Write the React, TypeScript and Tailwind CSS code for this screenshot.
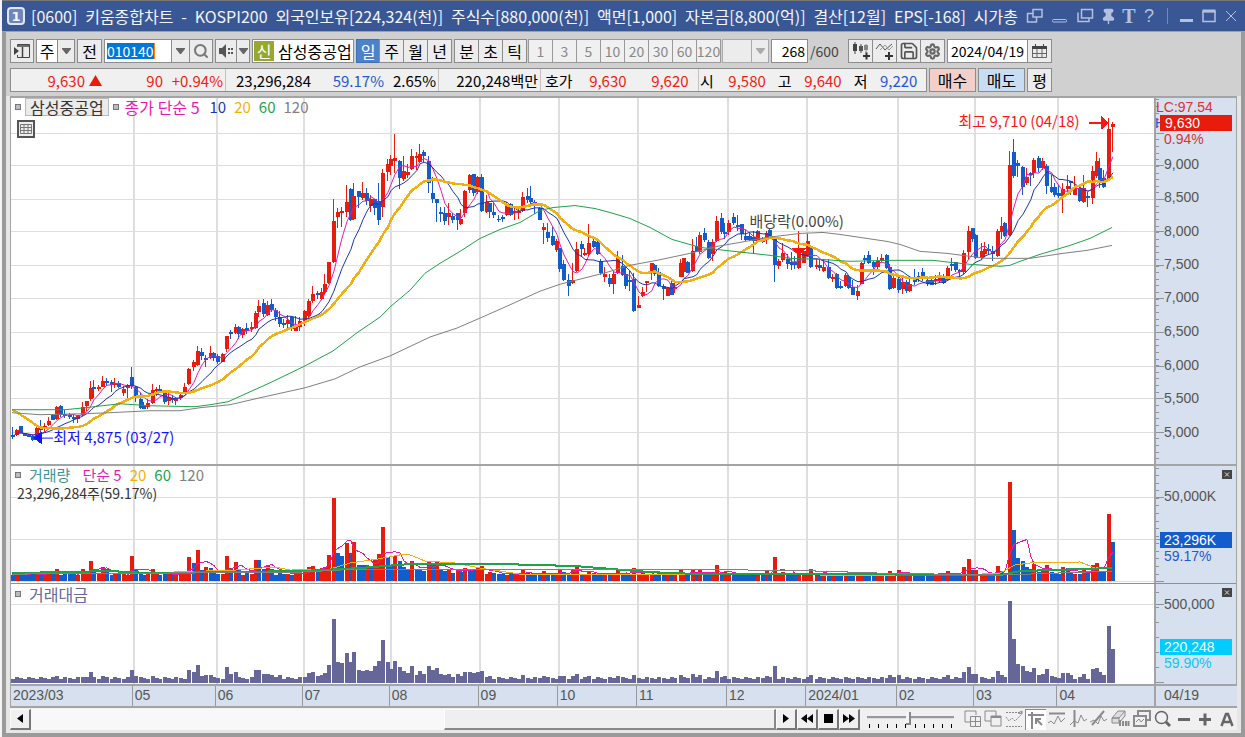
import React from "react";
import { Search, Settings, Save, Pin } from "lucide-react";

const RED = "#e81c0c";
const BLUE = "#125ccc";

/* x high bodyTop bodyBottom low direction */
const CANDLES = `
13 428 436 438 440 b;17 430 431 436 437 r;21 427 427 434 434 b;25 434 434 437 437 b;29 435 436 438 438 b;33 436 437 441 442 b;37 428 429 438 438 r;41 421 428 431 434 b;45 424 427 428 433 r;49 418 422 426 427 r;
53 415 416 421 421 b;57 407 408 420 421 r;61 406 407 416 418 b;65 411 415 417 419 b;70 414 416 418 420 b;74 416 418 420 424 b;78 416 416 420 424 r;83 403 408 416 417 r;87 402 402 407 412 r;91 382 389 400 402 r;
94 381 388 390 399 b;99 386 388 389 392 r;103 377 382 388 388 r;107 379 382 383 387 b;112 381 383 386 393 b;115 379 384 385 389 r;119 382 384 388 389 b;124 387 390 394 397 r;128 385 387 389 399 r;132 368 378 387 390 b;
136 387 388 399 403 b;141 394 400 409 410 b;144 403 407 410 410 b;148 400 404 408 410 r;153 385 391 404 405 r;157 388 390 391 397 r;160 386 390 394 394 b;165 394 394 403 405 b;169 394 398 402 406 r;173 396 399 401 404 b;
176 398 400 402 406 r;181 394 396 399 401 r;185 384 388 395 395 r;189 369 370 385 386 r;194 361 363 368 372 r;198 347 352 366 367 r;202 349 353 357 361 b;206 356 359 360 368 b;211 347 354 359 360 r;214 353 354 359 362 b;
218 355 357 363 365 b;223 354 355 363 363 r;227 337 337 350 353 r;231 331 333 334 340 b;236 325 328 334 335 r;239 327 328 335 340 b;243 329 330 336 339 r;247 324 329 332 335 b;252 323 328 330 333 r;256 312 314 329 330 r;
259 301 307 313 318 r;264 300 304 315 318 b;268 302 306 316 317 r;272 300 305 311 313 b;276 309 311 318 322 b;280 312 318 325 328 b;284 320 324 326 329 b;288 316 321 325 329 r;292 317 318 330 332 b;296 317 327 332 332 r;
300 318 322 328 332 r;305 311 312 323 327 r;309 300 302 317 319 r;313 287 295 302 304 r;318 292 294 296 300 b;322 289 293 300 301 r;325 275 285 293 295 r;329 263 263 284 285 r;334 199 222 263 264 r;338 208 212 217 229 r;
342 207 211 212 228 r;347 185 202 212 217 r;351 188 189 220 222 b;354 183 196 219 220 r;359 191 191 197 208 b;363 182 193 198 200 r;367 188 193 201 205 b;371 195 199 206 212 r;375 199 199 208 215 b;379 183 201 220 226 b;
383 169 173 207 217 r;388 159 164 172 181 r;391 155 159 166 175 r;395 134 158 161 173 r;400 160 161 178 189 b;404 156 171 179 181 r;408 164 172 175 178 r;412 149 156 169 170 r;417 152 156 158 170 r;420 144 154 162 163 r;
424 150 152 156 162 b;429 156 161 183 193 b;433 177 193 199 203 b;437 199 199 203 223 b;441 207 212 213 223 b;445 207 213 222 226 b;449 203 213 217 226 r;453 213 216 220 224 b;458 213 213 220 231 b;461 209 219 225 226 r;
465 190 191 213 217 r;470 174 175 190 193 r;474 174 174 193 196 b;478 176 177 192 194 r;482 174 177 211 212 b;487 195 202 212 213 r;490 203 203 212 218 b;494 203 212 215 218 b;499 215 219 220 223 b;503 215 217 218 223 b;
507 202 204 215 216 r;511 203 204 215 216 b;515 208 211 213 220 r;519 207 211 212 219 r;523 192 197 211 212 r;528 188 196 200 203 b;531 186 198 202 204 b;535 200 202 205 214 b;540 207 208 220 221 b;544 224 228 231 245 r;
548 224 233 239 243 b;553 228 237 246 247 b;557 240 242 251 253 r;560 249 249 270 273 b;564 261 265 281 282 b;569 275 281 287 297 b;573 264 281 284 285 r;577 243 250 272 273 r;582 242 245 250 258 b;585 249 254 255 257 r;
589 225 244 255 257 r;594 239 242 248 249 b;598 239 243 255 256 b;601 260 262 274 276 b;605 268 275 278 283 r;610 275 279 285 288 b;614 272 275 285 295 r;618 252 258 274 275 r;623 256 267 276 277 b;626 267 275 287 290 b;
630 272 281 283 292 b;634 274 280 312 313 b;639 297 306 309 309 r;643 288 293 297 298 r;647 282 282 283 293 r;652 264 264 273 281 r;655 265 266 275 277 b;659 269 273 287 288 b;664 285 287 290 301 b;668 288 289 297 297 r;
672 282 284 296 296 b;675 283 288 289 294 r;681 260 264 278 278 r;684 259 259 273 278 r;688 262 263 274 274 b;693 240 252 272 273 r;697 238 247 253 253 b;700 233 236 253 255 r;705 229 234 241 243 b;709 241 243 259 260 b;
713 240 243 255 262 r;717 216 222 242 243 r;722 213 218 233 235 b;725 224 233 235 240 b;729 220 224 233 236 r;734 213 217 224 226 b;738 215 226 228 232 b;742 225 225 235 241 b;746 231 237 241 242 b;750 234 237 241 242 b;
754 232 238 242 255 b;758 231 232 242 243 r;763 238 240 243 244 b;767 232 234 239 245 r;770 230 231 238 238 b;775 238 239 266 283 b;779 260 262 267 270 r;783 244 254 261 263 r;788 255 260 265 270 b;792 253 263 266 271 b;
795 257 263 266 270 b;799 232 253 269 270 r;804 250 252 264 264 r;808 235 242 257 258 r;811 246 247 268 269 b;817 260 266 268 270 r;820 260 266 269 272 b;824 260 268 272 273 r;829 260 268 279 280 b;833 275 278 280 283 r;
837 274 275 289 290 b;841 282 287 289 290 b;846 274 276 287 288 r;849 277 278 289 290 b;853 281 288 296 296 b;858 286 292 297 301 r;862 263 264 285 285 r;865 256 259 261 265 b;869 252 256 264 265 b;874 262 263 268 276 b;
878 258 262 268 272 r;882 255 259 262 263 r;887 255 256 269 270 b;890 265 268 290 291 b;894 275 279 289 290 r;899 277 280 291 294 b;903 279 283 290 295 r;907 281 283 292 294 b;910 277 285 292 293 r;915 270 279 283 286 b;
919 273 277 280 283 b;923 269 273 278 282 b;928 278 281 285 287 b;932 277 281 286 286 b;936 276 280 282 286 r;940 273 279 282 283 r;944 275 278 284 285 b;948 267 269 281 282 r;952 259 265 267 272 b;956 263 263 271 273 b;
960 270 271 273 281 b;964 251 254 273 275 r;969 227 232 253 260 r;973 229 229 240 243 b;976 235 236 259 260 b;982 244 252 259 260 r;985 243 250 255 258 r;989 245 250 252 256 b;993 247 252 255 262 b;998 230 232 257 258 r;
1002 217 227 233 240 r;1005 223 224 237 238 b;1010 151 165 236 237 r;1014 139 152 176 178 b;1018 160 163 166 177 b;1023 166 167 187 195 b;1027 168 177 183 185 r;1031 172 173 175 186 b;1034 158 160 173 178 r;1039 156 158 168 172 b;
1043 158 161 168 170 r;1047 164 166 186 194 b;1052 175 187 192 193 b;1055 183 187 195 197 b;1059 185 193 196 198 b;1063 183 189 197 213 r;1068 175 186 189 194 r;1071 181 181 183 195 b;1075 176 188 195 195 r;1080 187 188 201 202 b;
1084 175 188 202 203 r;1088 192 196 198 207 b;1093 166 171 198 204 r;1097 152 161 176 178 r;1100 158 168 183 188 b;1104 170 178 187 188 b;1109 118 129 180 180 r;1113 122 124 127 152 r`
  .trim()
  .split(";")
  .map((row) => {
    const [x, hi, top, bot, lo, dir] = row.trim().split(" ");
    return { x: +x, hi: +hi, top: +top, bot: +bot, lo: +lo, up: dir === "r" };
  });

/* x volumeHeight amountHeight direction */
const SPIKES = `57 12 7 r;83 12 6 r;87 8 6 r;91 20 11 r;94 12 6 b;103 14 7 r;107 12 6 b;132 25 13 r;136 12 7 b;153 12 7 r;189 24 13 r;194 18 11 b;198 31 18 r;202 11 7 b;206 14 8 r;211 13 8 b;227 25 16 r;231 13 9 b;236 19 11 r;239 12 6 b;256 21 13 r;259 21 13 b;264 12 9 b;268 16 9 r;272 12 8 b;280 11 8 b;305 9 6 r;309 14 10 r;313 15 11 r;318 10 7 b;322 13 8 r;325 14 10 r;329 26 18 r;334 82 64 r;338 28 21 b;342 25 20 b;347 38 30 r;351 28 21 b;354 39 31 r;359 16 13 b;363 16 12 b;367 16 13 r;371 15 12 b;375 22 17 r;379 27 22 r;383 54 43 r;388 24 21 b;391 16 14 b;395 25 22 r;400 20 16 b;404 14 12 b;408 12 10 b;412 20 17 r;417 11 8 b;420 12 12 b;424 10 9 b;429 20 17 r;433 16 13 b;437 19 15 r;441 11 9 b;445 10 8 b;449 12 9 r;453 8 6 b;458 11 9 r;461 9 7 b;465 13 11 r;470 12 11 b;474 11 10 b;478 13 11 r;482 15 12 r;490 9 7 r;523 11 8 r;544 10 7 r;560 11 7 r;564 9 7 b;573 12 7 r;577 15 9 r;589 9 7 r;618 11 7 r;634 13 8 r;681 11 8 r;693 12 9 r;700 11 8 r;717 16 12 r;725 9 7 r;767 10 7 r;775 24 17 r;783 9 6 r;811 12 8 r;890 10 8 r;899 11 8 r;947 10 8 r;964 14 11 r;969 22 16 r;973 11 9 b;976 11 9 r;998 15 12 r;1002 10 8 b;1010 98 82 r;1014 51 44 b;1018 23 19 b;1023 20 17 b;1027 14 12 b;1031 12 11 b;1034 17 15 r;1039 9 8 b;1043 10 9 r;1047 16 14 r;1052 9 7 b;1063 14 10 r;1068 13 10 b;1071 9 8 b;1084 11 9 r;1093 16 14 r;1097 18 15 r;1100 10 11 b;1104 10 8 b;1109 66 57 r;1113 39 34 b`
  .split(";")
  .map((row) => row.split(" "));

const BARS = CANDLES.map((c, i) => {
  const hit = SPIKES.find((s) => Math.abs(+s[0] - c.x) <= 1);
  return hit
    ? { x: c.x, vol: +hit[1], amt: +hit[2], up: hit[3] === "r" }
    : { x: c.x, vol: 6 + ((i * 7) % 4) * 0.7, amt: 4 + ((i * 5) % 3), up: c.up };
});

function average(values: number[], span: number) {
  return CANDLES.map((c, i) => {
    const part = values.slice(Math.max(0, i - span + 1), i + 1);
    return [c.x, part.reduce((a, b) => a + b, 0) / part.length];
  });
}
const join = (pts: number[][]) => pts.map((p) => `${p[0]},${p[1].toFixed(1)}`).join(" ");

const closes = CANDLES.map((c) => (c.up ? c.top : c.bot));
const ma5 = join(average(closes, 5));
const ma10 = join(average(closes, 10));
const ma20 = "12,411 18,414 22,417 30,422 35,426 41,429 60,430 80,428 86,426 " + join(average(closes, 20).slice(20));
const ma60 =
  "12,411 65,411 85,409 120,405 150,407 195,408 210,406 228,403 250,393 270,384 305,367 333,352 358,333 380,318 391,307 410,291 425,274 440,264 460,252 480,239 500,230 520,223 540,211 553,208 575,206 595,209 610,213 630,219 650,228 672,240 700,248 725,251 770,256 790,259 820,260 850,262 888,261 933,261 950,263 970,265 1000,267 1010,266 1020,262 1040,255 1070,246 1090,239 1112,228";
const ma120 =
  "12,414 40,416 85,415 110,414 150,412 180,412 200,409 230,406 260,399 305,389 335,380 360,368 390,357 430,338 457,329 480,319 507,307 540,292 560,285 607,273 630,266 657,261 690,254 717,247 740,243 767,238 800,234 823,233 840,235 887,242 900,245 920,252 947,254 970,257 987,259 1030,259 1063,254 1087,251 1112,246";
const vma5 = join(average(BARS.map((b) => 581 - b.vol), 5));
const vma20 =
  "12,573 140,573 235,570 275,567 290,570 330,569 350,563 378,559 400,555 410,555 425,561 455,563 480,568 520,574 600,574 750,574 830,575 960,575 1000,573 1015,565 1030,563 1080,562 1095,568 1112,567";
const vma60 =
  "12,573 110,571 150,573 300,571 360,568 410,564 500,564 575,566 650,572 700,574 830,574 1000,575 1020,571 1112,568";
const vma120 = "12,574 300,572 360,569 420,569 685,569 820,571 880,573 1000,575 1112,571";

const MONTH_X = [134, 217, 304, 391, 480, 559, 638, 728, 807, 898, 975, 1058];
const PRICE_Y = [133, 165, 199, 232, 266, 299, 333, 367, 399, 433];

function Grid({ ys, top, bottom }: { ys: number[]; top: number; bottom: number }) {
  return (
    <g fill="#dedede">
      {MONTH_X.map((x) => (
        <rect key={x} x={x - 1} y={top} width={2} height={bottom - top} />
      ))}
      {ys.map((y) => (
        <rect key={y} x={11} y={y} width={1143} height={1} />
      ))}
    </g>
  );
}

function Line({ points, color, width = 1 }: { points: string; color: string; width?: number }) {
  return <polyline points={points} fill="none" stroke={color} strokeWidth={width} />;
}

function Axis({ top, height, major, step }: { top: number; height: number; major: number[]; step: number }) {
  const minors = [];
  for (let y = major[major.length - 1] + step * 4; y > top; y -= step) if (y < top + height) minors.push(y);
  return (
    <svg className="absolute inset-0 h-full w-full" viewBox={`0 ${top} 82 ${height}`} preserveAspectRatio="none" shapeRendering="crispEdges" aria-hidden="true">
      <g fill="#8f9296">
        {minors.map((y) => (
          <rect key={y} x={0} y={y} width={3} height={1} />
        ))}
        {major.map((y) => (
          <rect key={y} x={0} y={y} width={8} height={1} />
        ))}
      </g>
    </svg>
  );
}

const PLOT = "absolute inset-0 h-full w-full";
const BTN = "flex h-6 items-center justify-center border border-[#8c8c8c] bg-[#ececec] leading-none text-black";
const AXIS = "relative w-[82px] border-l-2 border-[#a4a4a4] bg-[#d6e0ee] font-['Liberation_Sans'] text-sm leading-4";
const AXIS_LABEL = "absolute left-2 -translate-y-1/2 leading-4 text-[#555]";

function Down({ light = false }: { light?: boolean }) {
  return (
    <svg width="9" height="6" viewBox="0 0 9 6" aria-hidden="true">
      <path d="M0 0H9V1L5 6H4L0 1Z" fill={light ? "#aaa" : "#666"} />
    </svg>
  );
}

function Marker() {
  return <span className="inline-block size-1.5 shrink-0 border border-[#777] bg-[#bbb]" />;
}

function CloseBox() {
  return (
    <button aria-label="닫기" className="absolute right-1 top-1 flex h-[9px] w-2.5 items-center justify-center bg-[#444]">
      <svg width="6" height="5" viewBox="0 0 6 5" aria-hidden="true">
        <path d="M1 0.5L5 4.5M5 0.5L1 4.5" stroke="#ddd" />
      </svg>
    </button>
  );
}

function TitleBar() {
  const parts = ["[0600]", "키움종합차트", "-", "KOSPI200", "외국인보유[224,324(천)]", "주식수[880,000(천)]", "액면[1,000]", "자본금[8,800(억)]", "결산[12월]", "EPS[-168]", "시가총"];
  const icon = "flex h-6 w-[25px] items-center justify-center text-[#b3c1df]";
  return (
    <header className="flex h-8 items-center border-b border-t border-b-[#8fa2c8] border-t-[#777] bg-[#3a5795] pl-[5px] pr-[3px] text-[#f2f5fb]">
      <span className="flex size-[18px] shrink-0 items-center justify-center rounded border-2 border-[#dfe6f5] bg-[#6f86b8] font-['DejaVu_Sans'] text-[13px] font-bold leading-none">1</span>
      <h1 className="ml-1.5 flex min-w-0 flex-1 justify-between overflow-hidden whitespace-nowrap leading-6">
        {parts.map((p) => (
          <span key={p}>{p}</span>
        ))}
      </h1>
      <div className="ml-1 flex shrink-0 items-center">
        <button aria-label="창 분리" className={icon}>
          <svg width="18" height="16" viewBox="0 0 18 16" fill="none" stroke="currentColor" strokeWidth="1.5"><path d="M7 1.5H16V9H7ZM7 5.5H1.5V14H10.5V9" /></svg>
        </button>
        <button aria-label="내리기" className={icon}>
          <svg width="16" height="16" viewBox="0 0 16 16" fill="none" stroke="currentColor"><rect x="0.5" y="11.5" width="14" height="2.5" rx="1" /></svg>
        </button>
        <button aria-label="복제" className={icon}>
          <svg width="18" height="16" viewBox="0 0 18 16" fill="none" stroke="currentColor" strokeWidth="1.5"><path d="M5.500 1.500H16.500V10H5.500ZM2 4.500V13.500H13V10.500" /></svg>
        </button>
        <button aria-label="고정" className="flex h-6 w-[22px] items-center justify-center text-[#b3c1df]">
          <Pin size={17} fill="currentColor" />
        </button>
        <button aria-label="글꼴" className="flex h-6 w-5 items-center justify-center font-['Liberation_Serif'] text-xl font-bold text-[#b3c1df]">T</button>
        <button aria-label="도움말" className="flex h-6 w-5 items-center justify-center font-['Liberation_Sans'] text-lg text-[#b3c1df]">?</button>
        <span className="mx-2 h-4 w-px bg-[#7289ba]" />
        <button aria-label="최소화" className="flex h-6 w-[22px] items-center justify-center text-[#b3c1df]">
          <svg width="14" height="16" viewBox="0 0 14 16"><rect x="0" y="11" width="13" height="3" fill="currentColor" /></svg>
        </button>
        <button aria-label="최대화" className="flex h-6 w-[22px] items-center justify-center text-[#b3c1df]">
          <svg width="14" height="14" viewBox="0 0 14 14" fill="none" stroke="currentColor"><path d="M1 2.500H13V12.500H1Z" strokeWidth="1.5" /><path d="M0.500 2H13.500" strokeWidth="3" /></svg>
        </button>
        <button aria-label="닫기" className="flex h-6 w-[22px] items-center justify-center text-[#b3c1df]">
          <svg width="12" height="12" viewBox="0 0 12 12" stroke="currentColor"><path d="M1 1L11 11M11 1L1 11" /></svg>
        </button>
      </div>
    </header>
  );
}

function Toolbar() {
  return (
    <div className="flex items-center gap-0.5 px-1 text-black">
      <button aria-label="패널" className={`${BTN} w-6`}>
        <svg width="18" height="16" viewBox="0 0 18 16" fill="none" stroke="#444"><path d="M4.500 3V1.500H16.500V14.500H4.500V12" /><path d="M4 3H16.500M9.500 4V14" strokeWidth="1.500" /><path d="M1 4L6 8L1 12Z" fill="#444" stroke="none" /></svg>
      </button>
      <div className="flex">
        <button className={`${BTN} w-[22px] bg-white`}>주</button>
        <button aria-label="구분 선택" className={`${BTN} -ml-px w-[18px]`}><Down /></button>
      </div>
      <button className={`${BTN} w-[25px]`}>전</button>
      <div className="flex">
        <div className="flex h-6 w-[68px] items-center border border-[#8c8c8c] bg-white pl-0.5">
          <input aria-label="종목코드" defaultValue="010140" className="h-4 w-12 border-r border-orange-400 bg-[#0078d7] text-sm leading-4 text-white outline-none" />
        </div>
        <button aria-label="종목 목록" className={`${BTN} -ml-px w-[19px]`}><Down /></button>
        <button aria-label="종목 검색" className={`${BTN} -ml-px w-6`}><Search size={16} color="#777" strokeWidth={3} /></button>
      </div>
      <div className="flex">
        <button aria-label="소리" className={`${BTN} w-[22px]`}>
          <svg width="16" height="14" viewBox="0 0 16 14" fill="#555"><path d="M1 4H4L8 0V14L4 10H1ZM10 4H12V6H10ZM10 8H12V10H10ZM13 4H15V6H13ZM13 8H15V10H13Z" /></svg>
        </button>
        <button aria-label="소리 설정" className={`${BTN} -ml-px w-[14px]`}><Down /></button>
      </div>
      <div className="flex h-6 w-[102px] items-center border border-[#8c8c8c] bg-white pl-px">
        <span className="flex h-5 w-5 shrink-0 items-center justify-center bg-[#98a82f] text-white">신</span>
        <span className="ml-1 whitespace-nowrap">삼성중공업</span>
      </div>
      <div className="flex">
        <button className="flex h-6 w-6 items-center justify-center border border-[#3c71b8] bg-[#4d82c8] leading-none text-white">일</button>
        {["주", "월", "년"].map((t) => (
          <button key={t} className={`${BTN} -ml-px w-[25px]`}>{t}</button>
        ))}
      </div>
      <div className="flex">
        {["분", "초", "틱"].map((t) => (
          <button key={t} className={`${BTN} -mr-px w-[25px]`}>{t}</button>
        ))}
      </div>
      <div className="flex">
        {["1", "3", "5", "10", "20", "30", "60", "120"].map((t) => (
          <button key={t} className="-mr-px flex h-6 w-[25px] items-center justify-center border border-[#999] bg-[#f0f0f0] text-sm leading-none text-[#888]">{t}</button>
        ))}
      </div>
      <div className="flex">
        <span className="h-6 w-[30px] border border-[#aaa] bg-[#ececec]" />
        <button aria-label="주기 선택" className="-ml-px flex h-6 w-[18px] items-center justify-center border border-[#aaa] bg-[#ececec]"><Down light /></button>
      </div>
      <input aria-label="조회 개수" defaultValue="268" className="h-6 w-[37px] border border-[#8c8c8c] bg-white pr-0.5 text-right text-sm text-black" />
      <span className="w-9 text-sm text-[#444]">/600</span>
      <div className="flex">
        <button aria-label="차트 추가" className={`${BTN} -mr-px w-[25px]`}>
          <svg width="20" height="18" viewBox="0 0 20 18"><path d="M4 0V12M10 2V11" stroke="#444" /><rect x="2" y="2" width="4" height="7" fill="#444" /><rect x="8" y="4" width="4" height="5" fill="#555" /><path d="M15 2V11" stroke="#888" /><rect x="13" y="3" width="4" height="5" fill="#888" /><path d="M12 14H19M15.500 10.500V17.500" stroke="#333" strokeWidth="2" /></svg>
        </button>
        <button aria-label="지표 추가" className={`${BTN} -mr-px w-[25px]`}>
          <svg width="20" height="18" viewBox="0 0 20 18" fill="none"><path d="M1 7L5 2L10 8L17 2" stroke="#555" /><path d="M5 8L10 3L14 8L18 4" stroke="#999" /><path d="M10 14H18M14 10V18" stroke="#333" strokeWidth="2" /></svg>
        </button>
        <button aria-label="저장" className={`${BTN} -mr-px w-[25px]`}><Save size={20} color="#555" strokeWidth={2} /></button>
        <button aria-label="설정" className={`${BTN} w-[25px]`}><Settings size={17} color="#666" strokeWidth={3} /></button>
      </div>
      <div className="flex">
        <input aria-label="날짜" defaultValue="2024/04/19" className="h-6 w-[81px] border border-[#8c8c8c] bg-white pl-[3px] text-sm text-black" />
        <button aria-label="달력" className={`${BTN} -ml-px w-[25px]`}>
          <svg width="15" height="14" viewBox="0 0 15 14" fill="none" stroke="#666"><path d="M0.500 2.500H14.500V13.500H0.500ZM5 5V13M10 5V13M1 9.500H14" /><path d="M0 3.500H15" stroke="#444" strokeWidth="3" /><path d="M3.500 0V2M11.500 0V2" stroke="#444" /></svg>
        </button>
      </div>
    </div>
  );
}

function QuoteBar() {
  const cell = "flex items-center justify-end border-r border-[#c2c2c2]";
  const up = "text-[#f02010]";
  return (
    <div className="mt-[5px] flex items-center gap-0.5 px-1 text-[15px] text-black">
      <div className="flex h-6 w-[917px] whitespace-nowrap border border-[#8c8c8c] bg-[#f0f0f0] leading-none">
        <div className={`${cell} w-[215px] pr-0.5 ${up}`}>
          <span>9,630</span>
          <svg className="ml-1" width="13" height="11" viewBox="0 0 13 11" aria-label="상승"><path d="M6.500 0L13 11H0Z" fill={RED} /></svg>
          <span className="w-[61px] text-right">90</span>
          <span className="w-[60px] text-right">+0.94%</span>
        </div>
        <div className={`${cell} w-[213px] pr-0.5`}>
          <span>23,296,284</span>
          <span className="w-[73px] text-right text-[#2458d0]">59.17%</span>
          <span className="w-[52px] text-right">2.65%</span>
        </div>
        <div className={`${cell} w-[102px] pr-0.5`}>220,248백만</div>
        <div className={`${cell} w-[158px] justify-start pl-1`}>
          <span>호가</span>
          <span className={`w-[54px] text-right ${up}`}>9,630</span>
          <span className={`w-[62px] text-right ${up}`}>9,620</span>
        </div>
        <div className="flex flex-1 items-center pl-px">
          <span>시</span>
          <span className={`w-[52px] text-right ${up}`}>9,580</span>
          <span className="ml-3">고</span>
          <span className={`w-[50px] text-right ${up}`}>9,640</span>
          <span className="ml-3">저</span>
          <span className="w-[50px] text-right text-[#2458d0]">9,220</span>
        </div>
      </div>
      <button className="flex h-6 w-[47px] items-center justify-center border border-[#8c8c8c] bg-[#f3cfca] text-base leading-none">매수</button>
      <button className="flex h-6 w-[47px] items-center justify-center border border-[#8c8c8c] bg-[#c7ddf3] text-base leading-none">매도</button>
      <button className={`${BTN} w-[25px] text-base`}>평</button>
    </div>
  );
}

const PRICE_LABELS: [string, number][] = [["9,000", 164], ["8,500", 197], ["8,000", 232], ["7,500", 265], ["7,000", 298], ["6,500", 332], ["6,000", 366], ["5,500", 399], ["5,000", 433]];

function PricePanel() {
  return (
    <section className="flex grow-[368] basis-0 border-b-2 border-[#a4a4a4]">
      <div className="relative flex-1">
        <svg className={PLOT} viewBox="11 98 1143 367" preserveAspectRatio="none" shapeRendering="crispEdges" aria-label="주가 차트">
          <Grid ys={PRICE_Y} top={98} bottom={466} />
          {CANDLES.map((c) => (
            <g key={c.x} fill={c.up ? RED : BLUE}>
              <rect x={c.x - 1} y={c.hi} width={1} height={c.lo - c.hi} />
              <rect x={c.x - 2} y={c.top} width={4} height={Math.max(2, c.bot - c.top)} />
            </g>
          ))}
          <Line points={ma5} color="#e619b3" />
          <Line points={ma10} color="#1a36b0" />
          <Line points={ma20} color="#f2b010" width={2.5} />
          <Line points={ma60} color="#1ea348" />
          <Line points={ma120} color="#808080" />
          <path d="M792 249H806L799 257Z" fill="#ff1414" />
          <path d="M1089 123H1103" stroke="#ff1414" strokeWidth="2" />
          <path d="M1101 116L1109 123L1101 130Z" fill="#ff1414" />
          <path d="M42 439.500H53" stroke="#1414ff" />
          <path d="M42 433V446L33 439Z" fill="#1414ff" />
        </svg>
        <div className="relative flex items-center gap-1 whitespace-nowrap pl-1 leading-4">
          <Marker />
          <span className="border border-[#bbb] bg-[#ebebeb] px-1 text-[#333]">삼성중공업</span>
          <Marker />
          <span className="ml-0.5 text-[#e619b3]">종가 단순 5</span>
          <span className="ml-1.5 text-[15px] text-[#1a36b0]">10</span>
          <span className="ml-1 text-[15px] text-[#f0b010]">20</span>
          <span className="ml-1 text-[15px] text-[#1ea348]">60</span>
          <span className="ml-1 text-[15px] text-[#808080]">120</span>
        </div>
        <button aria-label="표 보기" className="relative ml-1.5 mt-1 flex size-[18px] items-center justify-center border-2 border-[#555] bg-[#eee]">
          <svg width="12" height="12" viewBox="0 0 12 12" fill="none" stroke="#777"><path d="M0.500 1.500H11.500V10.500H0.500ZM4 1V11M8 1V11M0 4.500H12M0 7.500H12" /></svg>
        </button>
        <span className="absolute left-[82.9%] top-[15px] whitespace-nowrap text-[15px] leading-4 text-[#ff1414]">최고 9,710 (04/18)</span>
        <span className="absolute left-[64.6%] top-[31.500%] whitespace-nowrap text-[15px] leading-4 text-[#444]">배당락(0.00%)</span>
        <span className="absolute left-[3.700%] top-[90.500%] whitespace-nowrap text-[15px] leading-4 text-[#1414ff]">최저 4,875 (03/27)</span>
      </div>
      <div className={AXIS}>
        <Axis top={98} height={367} major={PRICE_Y} step={6.67} />
        <span className="absolute left-0 top-px text-[#e03030]">LC:97.54</span>
        <span className="absolute -left-px top-[17px] text-[#2458d0]">H</span>
        <span className="absolute left-1 right-1 top-[17px] bg-[#e81c0c] pl-[5px] text-white">9,630</span>
        <span className="absolute left-2 top-[33px] text-[#e03030]">0.94%</span>
        {PRICE_LABELS.map(([t, y]) => (
          <span key={t} className={AXIS_LABEL} style={{ top: `${((y - 98) / 367) * 100}%` }}>{t}</span>
        ))}
      </div>
    </section>
  );
}

function VolumePanel() {
  return (
    <section className="flex grow-[118] basis-0 border-b border-[#8f8f8f]">
      <div className="relative flex-1">
        <svg className={PLOT} viewBox="11 467 1143 116" preserveAspectRatio="none" shapeRendering="crispEdges" aria-label="거래량 차트">
          <Grid ys={[498, 539, 581]} top={467} bottom={583} />
          {BARS.map((b) => (
            <rect key={b.x} x={b.x - 2} y={581 - b.vol} width={4} height={b.vol} fill={b.up ? RED : BLUE} />
          ))}
          <Line points={vma5} color="#e619b3" />
          <Line points={vma20} color="#f2b010" />
          <Line points={vma60} color="#1ea348" width={2} />
          <Line points={vma120} color="#808080" />
        </svg>
        <div className="relative flex items-center gap-2 whitespace-nowrap pl-1 pt-px text-[15px] leading-4">
          <Marker />
          <span className="text-[#3a9696]">거래량</span>
          <span className="ml-1 text-[#e619b3]">단순 5</span>
          <span className="text-[#f0b010]">20</span>
          <span className="text-[#1ea348]">60</span>
          <span className="text-[#808080]">120</span>
        </div>
        <div className="relative mt-0.5 pl-1.5 text-sm leading-4 text-[#333]">23,296,284주(59.17%)</div>
      </div>
      <div className={AXIS}>
        <Axis top={467} height={116} major={[498, 539, 581]} step={7.5} />
        <CloseBox />
        <span className={`${AXIS_LABEL} top-[26%]`}>50,000K</span>
        <span className="absolute left-1 right-1 top-[66px] bg-[#125ccc] pl-1 text-white">23,296K</span>
        <span className="absolute left-2 top-[82px] text-[#2458d0]">59.17%</span>
      </div>
    </section>
  );
}

function AmountPanel() {
  return (
    <section className="flex grow-[101] basis-0 border-b-2 border-[#a4a4a4]">
      <div className="relative flex-1">
        <svg className={PLOT} viewBox="11 584 1143 100" preserveAspectRatio="none" shapeRendering="crispEdges" aria-label="거래대금 차트">
          <Grid ys={[604]} top={584} bottom={684} />
          {BARS.map((b) => (
            <rect key={b.x} x={b.x - 2} y={683 - b.amt} width={4} height={b.amt} fill="#666699" />
          ))}
        </svg>
        <div className="relative flex items-center gap-2 pl-1 pt-0.5 leading-4 text-[#666699]">
          <Marker />
          <span>거래대금</span>
        </div>
      </div>
      <div className={AXIS}>
        <Axis top={584} height={100} major={[604, 682]} step={15} />
        <CloseBox />
        <span className={`${AXIS_LABEL} top-[20%]`}>500,000</span>
        <span className="absolute left-1 right-1 top-[55px] bg-[#00ccff] pl-1 text-white">220,248</span>
        <span className="absolute left-2 top-[71px] text-[#00ccff]">59.90%</span>
      </div>
    </section>
  );
}

const MONTHS: [string, number][] = [["2023/03", 123], ["05", 83], ["06", 87], ["07", 87], ["08", 89], ["09", 79], ["10", 79], ["11", 90], ["12", 79], ["2024/01", 91], ["02", 77], ["03", 83], ["04", 98]];

function DateRow() {
  return (
    <div className="flex h-[22px] border-b-2 border-l border-[#a4a4a4] bg-[#d6e0ee] font-['Liberation_Sans'] text-sm leading-[18px] text-[#555]">
      <div className="flex min-w-0 flex-1">
        {MONTHS.map(([t, w], i) => (
          <span key={t} className={i ? "basis-0 whitespace-nowrap border-l border-[#999] pl-0.5" : "basis-0 whitespace-nowrap pl-0.5"} style={{ flexGrow: w }}>{t}</span>
        ))}
      </div>
      <span className="w-[83px] border-l-2 border-[#a4a4a4] pl-2">04/19</span>
    </div>
  );
}

const SCROLL_BTN = "flex h-[21px] w-[21px] shrink-0 items-center justify-center border border-b-2 border-r-2 border-[#fafafa] border-b-[#777] border-r-[#777] bg-[#f0f0f0]";

const TOOLS: [string, React.ReactNode][] = [
  ["창 추가", <g key="a"><path d="M3 2H14V6M3 2V13H8" /><path d="M8.500 7.500H18.500V17.500H8.500ZM13.500 8V17M9 12.500H18" /></g>],
  ["창 복사", <g key="b"><path d="M2 2H13V12H2Z" fill="#f0f0f0" /><path d="M8 7H18V17H8Z" fill="#f0f0f0" /><path d="M8 8H18" strokeWidth="2" /></g>],
  ["지표 영역", <g key="c"><path d="M2 3.500H18M2 17.500H18" strokeDasharray="2 1" /><path d="M2 8L5 12L8 9L11 12L17 6" strokeDasharray="2 1" /><path d="M14 4L18 2V5Z" /></g>],
  ["십자선", <g key="d"><path d="M6 2V19M2 5H18" strokeWidth="2" /><path d="M16 15L10 9M10 14V9H15" strokeWidth="2" /></g>],
  ["수평선", <g key="e"><path d="M2 4.500H18" strokeWidth="2" /><path d="M1 14L4 12L7 15L11 7L14 13L18 9" /></g>],
  ["수직선", <g key="f"><path d="M6.500 1V18" strokeWidth="2" /><path d="M2 16L6 12L10 14L13 6L16 12L19 10" /></g>],
  ["추세선", <g key="g"><path d="M3 16L15 2" strokeWidth="2" /><path d="M1 13L5 11L9 15L12 7L15 12L18 10" /></g>],
  ["지우개", <g key="h"><path d="M2 9L8 2H15L9 9ZM2 9H9V14H2ZM9 14L15 7V2" fill="#ddd" /><path d="M10 17V11M13 17V12M16 17V12M18.500 17V12" strokeWidth="2" /></g>],
  ["차트 설정", <g key="i"><path d="M6 2H18V11H6Z" strokeWidth="2" /><path d="M2 7H14V17H2Z" fill="#f0f0f0" strokeWidth="2" /><path d="M4 13L7 10L9 13L12 10" /></g>],
  ["돋보기", <g key="j"><circle cx="8.500" cy="8.500" r="6" strokeWidth="1.5" /><path d="M13 13L17 17" strokeWidth="3" /></g>],
  ["축소", <path key="k" d="M4 10.500H16" strokeWidth="3" />],
  ["확대", <path key="l" d="M4 10.500H16M10 4.500V16.500" strokeWidth="3" />],
  ["자동", <path key="m" d="M4.500 17L9 5H11L15.500 17M6.500 13H13.500" strokeWidth="2.500" />],
];

function BottomBar() {
  return (
    <div className="flex h-[22px] items-center bg-[#f0f0f0]">
      <button aria-label="왼쪽으로" className={SCROLL_BTN}><svg width="6" height="9" viewBox="0 0 6 9"><path d="M6 0V9L0 4.500Z" /></svg></button>
      <div className="flex h-[21px] min-w-0 flex-1 justify-end bg-[#f8f8f8]">
        <div className="h-full w-[44.600%] border border-b-2 border-r-2 border-white border-b-[#888] border-r-[#888] bg-[#efefef]" />
      </div>
      <button aria-label="오른쪽으로" className={SCROLL_BTN}><svg width="6" height="9" viewBox="0 0 6 9"><path d="M0 0V9L6 4.500Z" /></svg></button>
      <button aria-label="뒤로 재생" className={SCROLL_BTN}><svg width="12" height="9" viewBox="0 0 12 9"><path d="M6 0V9L0 4.500ZM12 0V9L6 4.500Z" /></svg></button>
      <button aria-label="정지" className={SCROLL_BTN}><svg width="9" height="9" viewBox="0 0 9 9"><path d="M0 0H9V9H0Z" /></svg></button>
      <button aria-label="앞으로 재생" className={SCROLL_BTN}><svg width="12" height="9" viewBox="0 0 12 9"><path d="M0 0V9L6 4.500ZM6 0V9L12 4.500Z" /></svg></button>
      <div className="ml-[7px] flex w-[87px] flex-col">
        <input
          type="range"
          aria-label="재생 속도"
          defaultValue={47}
          className="h-[14px] w-full appearance-none bg-transparent [&::-webkit-slider-runnable-track]:h-[3px] [&::-webkit-slider-runnable-track]:border-t-2 [&::-webkit-slider-runnable-track]:border-[#999] [&::-webkit-slider-runnable-track]:bg-[#ddd] [&::-webkit-slider-thumb]:-mt-[6px] [&::-webkit-slider-thumb]:h-[13px] [&::-webkit-slider-thumb]:w-[5px] [&::-webkit-slider-thumb]:appearance-none [&::-webkit-slider-thumb]:border-b-2 [&::-webkit-slider-thumb]:border-r-2 [&::-webkit-slider-thumb]:border-[#888] [&::-webkit-slider-thumb]:bg-[#f4f4f4]"
        />
        <div className="flex justify-between px-0.5">
          {Array.from({ length: 10 }, (_, i) => (
            <span key={i} className="h-1 w-px bg-black" />
          ))}
        </div>
      </div>
      <div className="ml-[7px] flex w-[276px] justify-between">
        {TOOLS.map(([name, art], i) => (
          <button key={name} aria-label={name} className={i === 3 ? "flex h-[21px] w-[21px] items-center justify-center border-l border-t border-[#888] bg-white" : "flex h-[21px] w-[21px] items-center justify-center"}>
            <svg width="20" height="20" viewBox="0 0 20 20" fill="none" stroke={i > 8 ? "#666" : "#8a8a8a"}>{art}</svg>
          </button>
        ))}
      </div>
    </div>
  );
}

export default function App() {
  return (
    <div className="flex min-h-screen flex-col bg-[#f4f4f4] pl-0.5 font-['Noto_Sans_CJK_KR',sans-serif] text-base">
      <TitleBar />
      <div className="flex flex-1 flex-col border-b-4 border-l-4 border-r-4 border-[#9a9a9a] bg-[#e6e6e6]">
        <div className="bg-[#d0d0d0] pb-1 pt-[7px]">
          <Toolbar />
          <QuoteBar />
        </div>
        <main className="flex flex-1 flex-col px-1 pb-[3px]">
          <div className="flex flex-1 flex-col border-l border-r border-t-2 border-[#a4a4a4] bg-white">
            <PricePanel />
            <VolumePanel />
            <AmountPanel />
          </div>
          <DateRow />
          <BottomBar />
        </main>
      </div>
    </div>
  );
}
